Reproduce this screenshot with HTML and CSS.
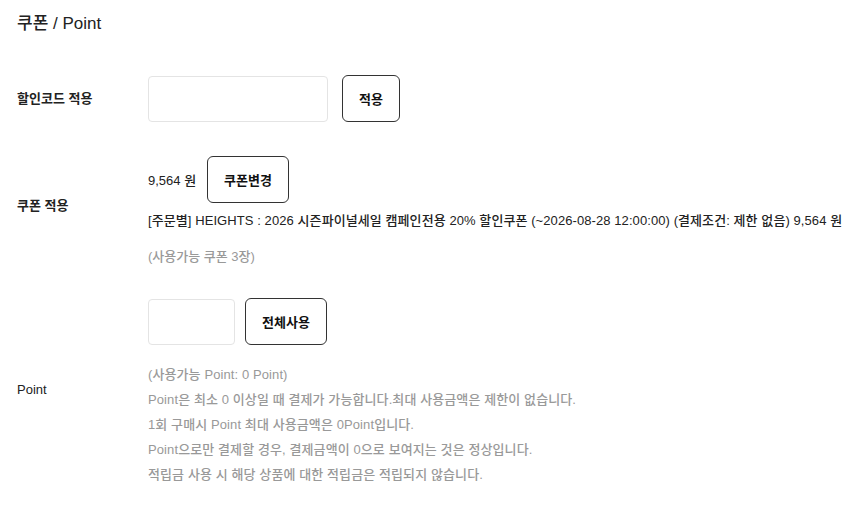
FILE: index.html
```html
<!DOCTYPE html>
<html>
<head>
<link rel="stylesheet" href="styles.css">
</head>
<body>
<div class="discount-wrap">
<h2 class="section-title">쿠폰 / Point</h2>

<div class="discount-table">
<div class="row">
<div class="row-label strong">할인코드 적용</div>
<div class="row-body">
<div class="field-line">
<input type="text" class="text-input code-input">
<button class="line-btn">적용</button>
</div>
</div>
</div>

<div class="row row-coupon">
<div class="row-label strong">쿠폰 적용</div>
<div class="row-body">
<div class="field-line">
<span class="amount">9,564 원</span>
<button class="line-btn">쿠폰변경</button>
</div>
<p class="coupon-desc">[주문별] HEIGHTS : 2026 시즌파이널세일 캠페인전용 20% 할인쿠폰 (~2026-08-28 12:00:00) (결제조건: 제한 없음) 9,564 원</p>
<p class="note coupon-count">(사용가능 쿠폰 3장)</p>
</div>
</div>

<div class="row row-point">
<div class="row-label">Point</div>
<div class="row-body">
<div class="field-line">
<input type="text" class="text-input point-input">
<button class="line-btn">전체사용</button>
</div>
<ul class="note point-notes">
<li>(사용가능 Point: 0 Point)</li>
<li>Point은 최소 0 이상일 때 결제가 가능합니다.최대 사용금액은 제한이 없습니다.</li>
<li>1회 구매시 Point 최대 사용금액은 0Point입니다.</li>
<li>Point으로만 결제할 경우, 결제금액이 0으로 보여지는 것은 정상입니다.</li>
<li>적립금 사용 시 해당 상품에 대한 적립금은 적립되지 않습니다.</li>
</ul>
</div>
</div>
</div>
</div>
</body>
</html>
```

FILE: styles.css
```css
body {
margin: 0;
background: #fff;
color: #222;
font-family: "Liberation Sans", "Noto Sans CJK KR", sans-serif;
font-size: 13px;
font-weight: 500;
}

.discount-wrap {
padding: 14px 17px;
}

.section-title {
margin: 0;
font-size: 17px;
font-weight: 500;
line-height: 20px;
}

.discount-table {
display: flex;
flex-direction: column;
gap: 34px;
margin-top: 41px;
}

.row {
display: grid;
grid-template-columns: 131px 1fr;
align-items: center;
}

.row-label {
line-height: 18px;
}

.row-coupon {
margin-bottom: -2px;
}

.row-coupon .row-label {
margin-bottom: 10px;
}

.row-point .row-label {
margin-bottom: 6px;
}

.strong {
font-weight: 700;
}

.field-line {
display: flex;
align-items: center;
gap: 14px;
}

.text-input {
box-sizing: border-box;
height: 46px;
border: 1px solid #e4e4e4;
border-radius: 4px;
background: #fff;
outline: none;
}

.code-input {
width: 180px;
}

.point-input {
width: 87px;
margin-right: -4px;
}

.line-btn {
box-sizing: border-box;
height: 47px;
padding: 0 16px;
border: 1px solid #333;
border-radius: 6px;
background: #fff;
color: #111;
font-family: inherit;
font-size: 13px;
font-weight: 700;
}

.amount {
margin-right: -3px;
}

.coupon-desc {
margin: 9px 0 0;
line-height: 18px;
white-space: nowrap;
letter-spacing: 0.08px;
}

.note {
color: #999;
}

.coupon-count {
margin: 18px 0 0;
line-height: 18px;
}

.point-notes {
list-style: none;
margin: 17px 0 0;
padding: 0;
line-height: 25px;
letter-spacing: 0.1px;
}
```
